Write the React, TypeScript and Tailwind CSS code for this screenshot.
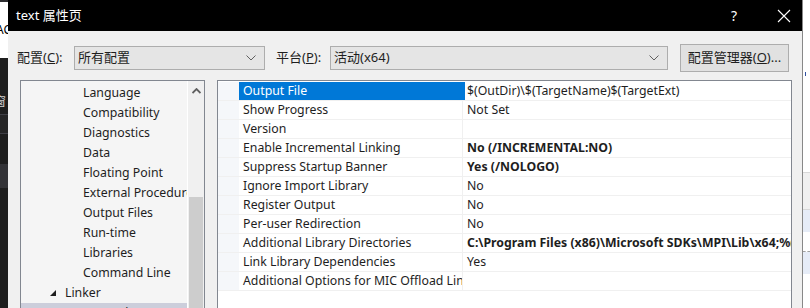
import React from "react";

const FONT = { fontFamily: '"Noto Sans", "Noto Sans CJK SC", sans-serif' };

const treeItems = [
  "Language",
  "Compatibility",
  "Diagnostics",
  "Data",
  "Floating Point",
  "External Procedures",
  "Output Files",
  "Run-time",
  "Libraries",
  "Command Line",
];

const rows: { name: string; value: string; bold?: boolean }[] = [
  { name: "Output File", value: "$(OutDir)\\$(TargetName)$(TargetExt)" },
  { name: "Show Progress", value: "Not Set" },
  { name: "Version", value: "" },
  { name: "Enable Incremental Linking", value: "No (/INCREMENTAL:NO)", bold: true },
  { name: "Suppress Startup Banner", value: "Yes (/NOLOGO)", bold: true },
  { name: "Ignore Import Library", value: "No" },
  { name: "Register Output", value: "No" },
  { name: "Per-user Redirection", value: "No" },
  { name: "Additional Library Directories", value: "C:\\Program Files (x86)\\Microsoft SDKs\\MPI\\Lib\\x64;%(AdditionalLibraryDirectories)", bold: true },
  { name: "Link Library Dependencies", value: "Yes" },
  { name: "Additional Options for MIC Offload Linker", value: "" },
];

function Chevron() {
  return (
    <svg width="10" height="6" viewBox="0 0 10 6" className="shrink-0">
      <path d="M0.5 0.5 L5 5 L9.5 0.5" fill="none" stroke="#606060" strokeWidth="1" />
    </svg>
  );
}

export default function App() {
  return (
    <div className="flex h-[308px] w-[810px] overflow-hidden bg-white text-[12.3px] text-[#1e1e1e]" style={FONT}>
      {/* left background strip */}
      <div className="flex w-[8px] shrink-0 flex-col overflow-hidden">
        <div className="h-[2px] bg-[#2d2d30]" />
        <div className="flex h-[56px] items-center bg-white text-[12px] text-black">
          <span className="-ml-[4px] whitespace-nowrap">AC</span>
        </div>
        <div className="flex flex-1 flex-col bg-[#1e1e1e]">
          <div className="mt-[38px] text-[12px] leading-none text-[#d0d0d0]">
            <span className="-ml-[6px]">窗</span>
          </div>
          <div className="mt-[6px] h-[20px] border-y border-[#3f3f46] bg-[#252526]" />
          <div className="mt-[30px] h-[24px] bg-[#333337]" />
          <div className="flex-1 bg-[#1e1e1e]" />
        </div>
      </div>

      {/* dialog */}
      <div className="flex w-[794px] shrink-0 flex-col bg-[#f0f0f0]">
        <div className="flex h-[31px] shrink-0 items-center bg-black pl-[8px] text-[13px] text-white">
          <span>text 属性页</span>
          <span className="ml-auto mr-[40px] text-[14px]">?</span>
          <svg width="14" height="14" viewBox="0 0 14 14" className="mr-[11px]">
            <path d="M1 1 L13 13 M13 1 L1 13" stroke="white" strokeWidth="1.1" />
          </svg>
        </div>

        <div className="flex flex-1 flex-col pl-[12px] pr-[10px]">
          {/* config row */}
          <div className="mt-[13px] flex h-[28px] items-center text-[13px]">
            <span className="-ml-[3px] w-[57px]">
              配置(<span className="underline">C</span>):
            </span>
            <div className="flex h-[24px] w-[191px] items-center border border-[#adadad] bg-[#e5e5e5] pl-[3px] pr-[8px]">
              <span className="flex-1">所有配置</span>
              <Chevron />
            </div>
            <span className="ml-[11px] w-[54px]">
              平台(<span className="underline">P</span>):
            </span>
            <div className="flex h-[24px] w-[338px] items-center border border-[#adadad] bg-[#e5e5e5] pl-[3px] pr-[8px]">
              <span className="flex-1">活动(x64)</span>
              <Chevron />
            </div>
            <div className="ml-[12px] flex h-[28px] w-[109px] items-center justify-center border border-[#adadad] bg-[#e1e1e1]">
              配置管理器(<span className="underline">O</span>)...
            </div>
          </div>

          {/* panels */}
          <div className="mt-[8px] flex flex-1 gap-[12px] overflow-hidden">
            {/* tree */}
            <div className="flex h-[240px] w-[185px] shrink-0 overflow-hidden border border-[#828790] bg-[#f5f5f5]">
              <div className="flex min-w-0 flex-1 flex-col overflow-hidden pt-[2px]">
                {treeItems.map((t) => (
                  <div key={t} className="flex h-[20px] shrink-0 items-center overflow-hidden whitespace-nowrap pl-[62px]">
                    {t}
                  </div>
                ))}
                <div className="flex h-[20px] shrink-0 items-center pl-[28px]">
                  <svg width="8" height="8" viewBox="0 0 8 8" className="mr-[8px]">
                    <path d="M7 1 L7 7 L1 7 Z" fill="#1e1e1e" />
                  </svg>
                  Linker
                </div>
                <div className="flex h-[20px] shrink-0 items-center whitespace-nowrap bg-[#cccedb] pl-[62px]">General</div>
              </div>
              <div className="flex w-[17px] shrink-0 flex-col border-l border-white bg-[#f0f0f0]">
                <div className="flex h-[20px] items-center justify-center">
                  <svg width="9" height="6" viewBox="0 0 9 6">
                    <path d="M0.5 5 L4.5 1 L8.5 5" fill="none" stroke="#606060" strokeWidth="1.8" />
                  </svg>
                </div>
                <div className="mx-[1px] mt-[96px] flex-1 bg-[#cdcdcd]" />
              </div>
            </div>

            {/* property grid */}
            <div className="flex h-[240px] w-[575px] shrink-0 flex-col overflow-hidden border border-[#828790] bg-white pt-[1px]">
              {rows.map((r, i) => {
                const sel = i === 0;
                return (
                  <div key={r.name} className="flex h-[19px] shrink-0 border-b border-[#f0f0f0]">
                    <div className="w-[21px] shrink-0 bg-[#f5f7fa]" />
                    <div
                      className={`flex w-[223px] shrink-0 items-center overflow-hidden whitespace-nowrap pl-[4px] pt-[1px] ${
                        sel ? "bg-[#0078d7] text-white" : ""
                      }`}
                    >
                      {r.name}
                    </div>
                    <div className={`w-[1px] shrink-0 ${sel ? "bg-[#0078d7]" : "bg-[#f0f0f0]"}`} />
                    <div
                      className={`flex min-w-0 flex-1 items-center overflow-hidden whitespace-nowrap pt-[1px] ${
                        sel ? "border-l-[2px] border-[#0078d7] pl-[2px]" : "pl-[4px]"
                      } ${r.bold ? "font-bold" : ""}`}
                    >
                      {r.value}
                    </div>
                  </div>
                );
              })}
              <div className="flex-1 bg-white" />
            </div>
          </div>
        </div>
      </div>

      {/* right background strip */}
      <div className="flex w-[8px] shrink-0 flex-col border-l border-[#888888] bg-white">
        <div className="h-[72px]" />
        <div className="ml-[2px] h-[4px] w-[1px] bg-[#3050a0]" />
        <div className="h-[96px]" />
        <div className="h-[38px] border-y border-[#d8d8d8] bg-[#f0f0f0]" />
        <div className="h-[22px] bg-[#e6ecf7]" />
        <div className="h-[20px] border-b border-dashed border-[#a0a0a0] bg-white" />
        <div className="h-[22px] bg-[#e6ecf7]" />
        <div className="flex-1 bg-white" />
      </div>
    </div>
  );
}
